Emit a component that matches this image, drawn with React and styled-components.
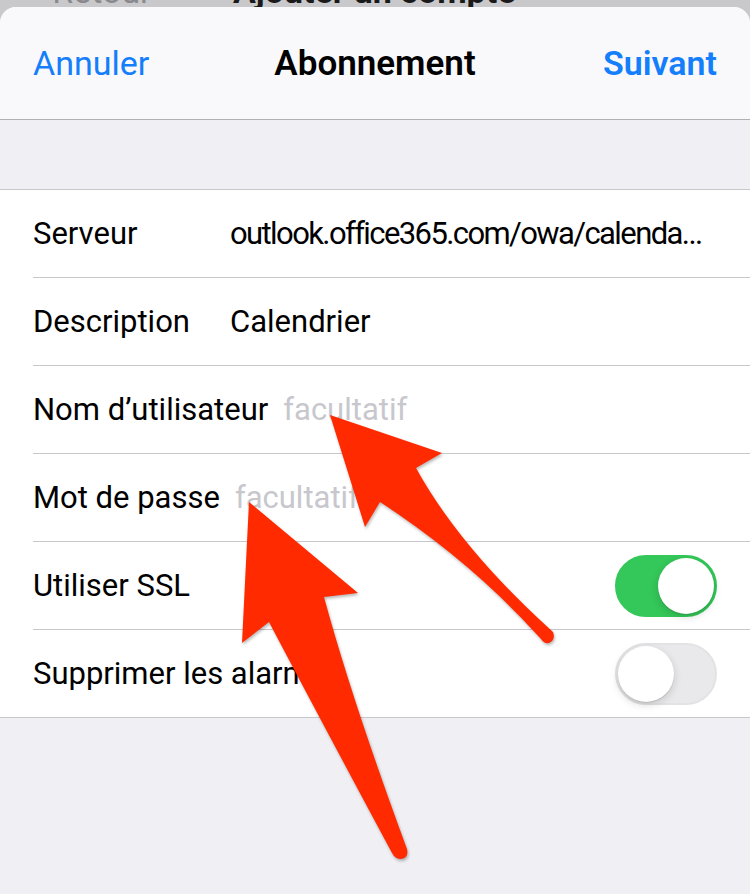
import React from 'react';
import styled, { createGlobalStyle } from 'styled-components';

const GlobalStyle = createGlobalStyle`
  html, body {
    margin: 0;
    padding: 0;
    background: #efeff4;
    font-family: Roboto, "Liberation Sans", sans-serif;
    -webkit-font-smoothing: antialiased;
  }
`;

const Page = styled.div`
  position: relative;
  width: 750px;
  min-height: 894px;
  background: #c9c9cb;
  overflow: hidden;
`;

const Backdrop = styled.div`
  height: 7px;
  overflow: hidden;
`;

const BackdropNav = styled.div`
  display: flex;
  align-items: center;
  height: 40px;
  margin-top: -29px;
  padding-left: 20px;
  font-size: 34px;
`;

const BackLink = styled.span`
  color: #8a8a8e;
  width: 213px;
  &::before {
    content: '‹';
    margin-right: 22px;
  }
`;

const BackTitle = styled.span`
  color: #1a1a1a;
  font-weight: 700;
`;

const Sheet = styled.div`
  background: #efeff4;
  border-radius: 16px 16px 0 0;
  overflow: hidden;
  min-height: 887px;
`;

const Header = styled.header`
  height: 112px;
  background: #f9f9fb;
  border-bottom: 1px solid #b1b1b3;
  display: grid;
  grid-template-columns: 1fr auto 1fr;
  align-items: center;
  padding: 0 33px;
  font-size: 34px;
`;

const NavButton = styled.button`
  border: none;
  background: none;
  padding: 0;
  font: inherit;
  color: #147efb;
  font-weight: ${(p) => (p.$bold ? 600 : 400)};
  justify-self: ${(p) => (p.$end ? 'end' : 'start')};
`;

const Title = styled.h1`
  margin: 0;
  font-size: 35px;
  font-weight: 600;
  color: #000;
`;

const Gap = styled.div`
  height: 69px;
`;

const List = styled.div`
  background: #fff;
  border-top: 1px solid #c8c7cc;
  border-bottom: 1px solid #c8c7cc;
  padding-left: 33px;
`;

const Row = styled.div`
  display: flex;
  align-items: center;
  height: 87px;
  padding-right: 33px;
  border-bottom: 1px solid #c8c7cc;
  font-size: 31px;
  &:last-child {
    border-bottom: none;
  }
`;

const Label = styled.span`
  min-width: 182px;
  margin-right: 15px;
  color: #000;
  white-space: nowrap;
  flex: ${(p) => (p.$grow ? 1 : 'none')};
`;

const Value = styled.span`
  flex: 1;
  min-width: 0;
  white-space: nowrap;
  overflow: hidden;
  text-overflow: clip;
  letter-spacing: ${(p) => (p.$tight ? '-1.6px' : '0')};
  color: ${(p) => (p.$placeholder ? '#c7c7cd' : '#000')};
`;

const Switch = styled.div`
  position: relative;
  width: 102px;
  height: 62px;
  box-sizing: border-box;
  border-radius: 31px;
  background: ${(p) => (p.$on ? '#34c759' : '#e9e9eb')};
  border: 2px solid ${(p) => (p.$on ? '#34c759' : '#e3e3e5')};
  flex: none;

  &::after {
    content: '';
    position: absolute;
    top: 1px;
    left: ${(p) => (p.$on ? '41px' : '1px')};
    width: 56px;
    height: 56px;
    border-radius: 50%;
    background: #fff;
    box-shadow: 0 3px 8px rgba(0, 0, 0, 0.15), 0 1px 1px rgba(0, 0, 0, 0.12);
  }
`;

const Arrows = styled.svg`
  position: absolute;
  top: 0;
  left: 0;
  pointer-events: none;
  filter: drop-shadow(1px 2px 1.5px rgba(0, 0, 0, 0.28));
`;

const rows = [
  { label: 'Serveur', value: 'outlook.office365.com/owa/calenda...', tight: true },
  { label: 'Description', value: 'Calendrier' },
  { label: 'Nom d’utilisateur', value: 'facultatif', placeholder: true },
  { label: 'Mot de passe', value: 'facultatif', placeholder: true },
  { label: 'Utiliser SSL', toggle: true, on: true },
  { label: 'Supprimer les alarmes', toggle: true, on: false },
];

const App = () => {
  return (
    <Page>
      <GlobalStyle />
      <Backdrop>
        <BackdropNav>
          <BackLink>Retour</BackLink>
          <BackTitle>Ajouter un compte</BackTitle>
        </BackdropNav>
      </Backdrop>
      <Sheet>
        <Header>
          <NavButton>Annuler</NavButton>
          <Title>Abonnement</Title>
          <NavButton $bold $end>Suivant</NavButton>
        </Header>
        <Gap />
        <List>
          {rows.map((row) => (
            <Row key={row.label}>
              <Label $grow={row.toggle}>{row.label}</Label>
              {row.toggle ? (
                <Switch $on={row.on} />
              ) : (
                <Value $placeholder={row.placeholder} $tight={row.tight}>
                  {row.value}
                </Value>
              )}
            </Row>
          ))}
        </List>
      </Sheet>
      <Arrows width="750" height="894" viewBox="0 0 750 894">
        <path
          fill="#ff2a00"
          d="M330 415 L442 453 L416 468 Q460 548 553 632 Q556 640 549 643 Q544 644 541 639 Q472 562 380 502 L365 527 Z"
        />
        <path
          fill="#ff2a00"
          d="M249 502 L358 593 L324 597 Q352 700 407 849 Q409 858 401 859 Q395 859 392 853 Q318 715 269 622 L242 643 Z"
        />
      </Arrows>
    </Page>
  );
};

export default App;
